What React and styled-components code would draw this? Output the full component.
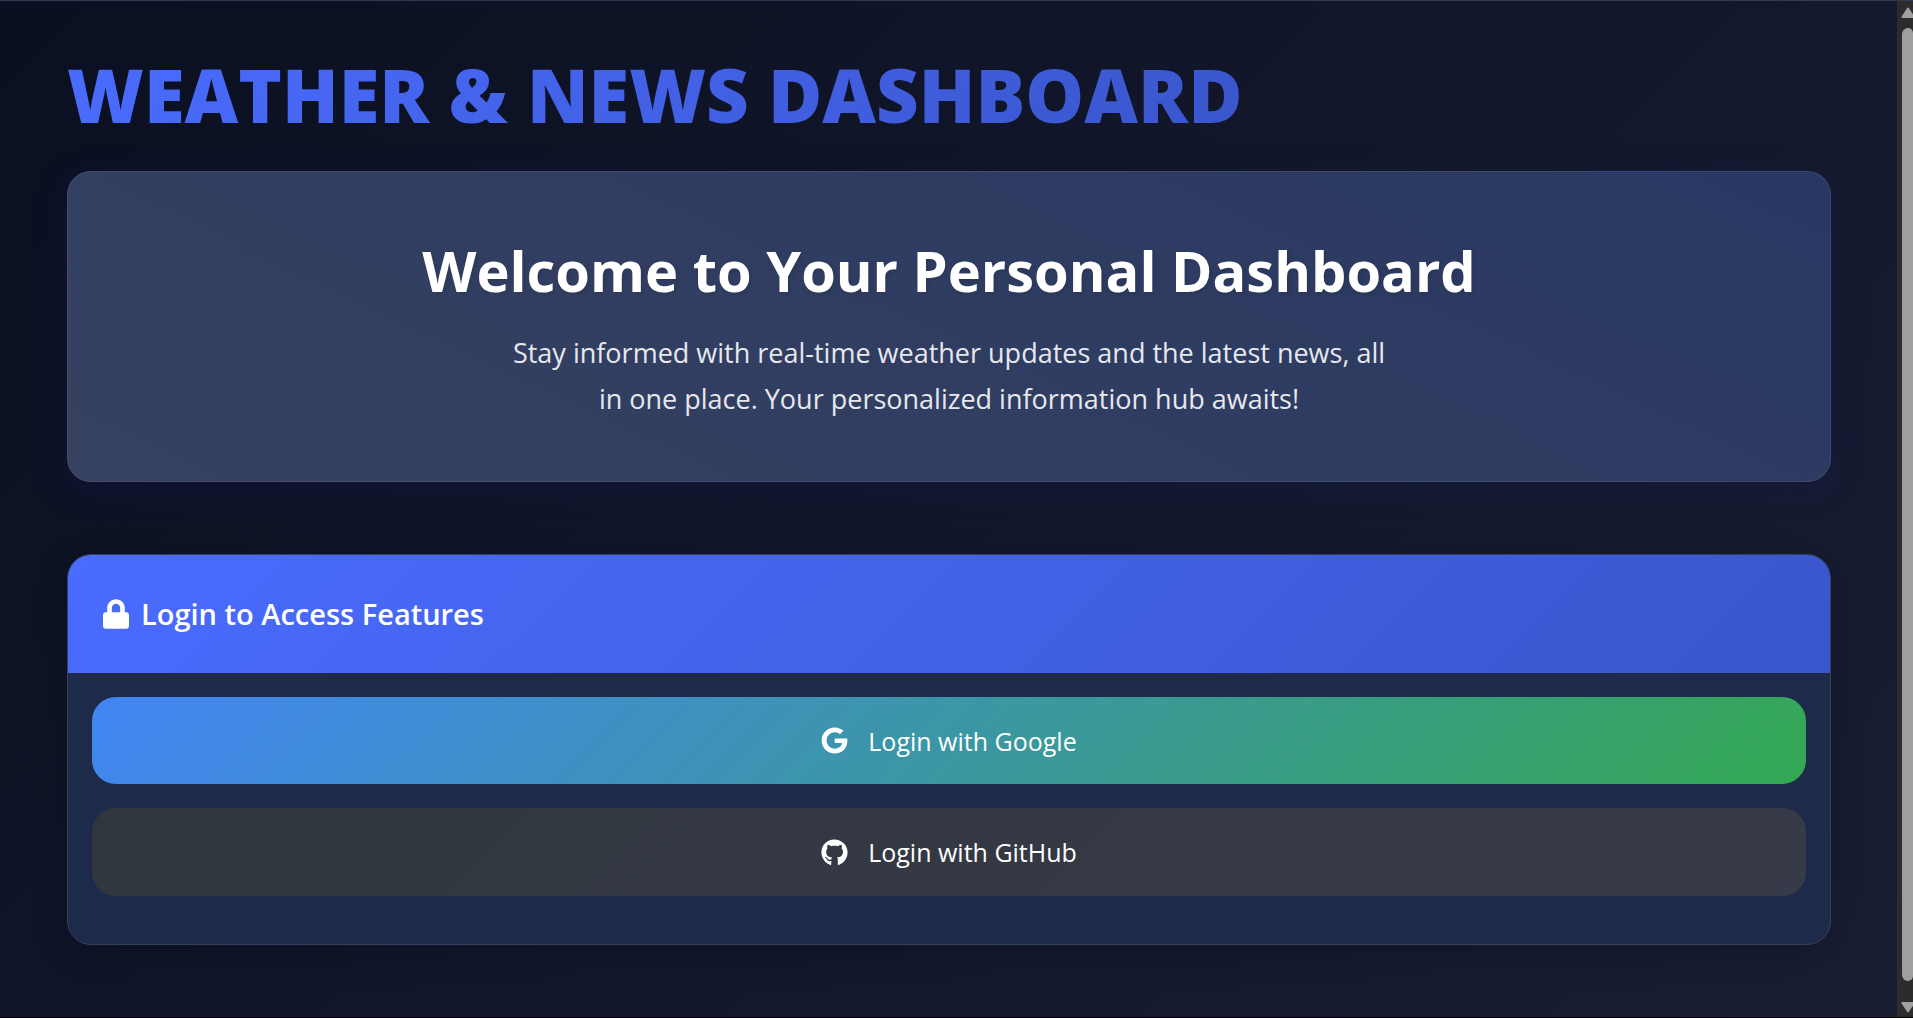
import React from "react";
import styled, { createGlobalStyle } from "styled-components";
import { FaLock, FaGoogle, FaGithub } from "react-icons/fa";

const GlobalStyle = createGlobalStyle`
  *, *::before, *::after { box-sizing: border-box; }
  body {
    margin: 0;
    background: #0a0e1f;
    color: #fff;
    font-family: "Open Sans", "Noto Sans", sans-serif;
  }
  h1, h2, h3, p { margin: 0; }
`;

const Shell = styled.div`
  display: flex;
  height: 100vh;
  overflow: hidden;
  border-top: 1px solid #2f3a4f;
  border-bottom: 1px solid #000;
`;

const Page = styled.main`
  flex: 1;
  min-width: 0;
  padding: 46px 66px 72px 67px;
  background: linear-gradient(135deg, #0a0f21 0%, #1a1e34 100%);
`;

const Title = styled.h1`
  width: fit-content;
  margin-bottom: 28px;
  font-size: 74px;
  line-height: 96px;
  font-weight: 800;
  text-transform: uppercase;
  white-space: nowrap;
  color: transparent;
  background: linear-gradient(135deg, #4a6cff, #3a56cc);
  background-clip: text;
`;

const Hero = styled.section`
  display: flex;
  flex-direction: column;
  align-items: center;
  gap: 22px;
  padding: 60px 60px 59px;
  margin-bottom: 72px;
  text-align: center;
  border: 1px solid rgba(255, 255, 255, 0.08);
  border-radius: 24px;
  background: linear-gradient(25deg, #374260, #293863) border-box;
  box-shadow: 0 8px 32px rgba(20, 24, 80, 0.35);
`;

const Heading = styled.h2`
  font-size: 56px;
  line-height: 76px;
  font-weight: 700;
  text-shadow: 2px 2px 4px rgba(0, 0, 0, 0.1);
`;

const Lead = styled.p`
  max-width: 900px;
  font-size: 27px;
  line-height: 46px;
  color: #e6e8ee;
`;

const Card = styled.section`
  overflow: hidden;
  border: 1px solid #34415f;
  border-radius: 24px;
  background: #1e2a4a;
  box-shadow: 0 8px 32px rgba(8, 10, 24, 0.3);
`;

const CardHeader = styled.header`
  display: flex;
  align-items: center;
  gap: 12px;
  height: 118px;
  padding: 0 35px;
  background: linear-gradient(135deg, #4a6cff, #3a56cc);

  svg { width: 26px; height: 30px; }
`;

const CardTitle = styled.h3`
  font-size: 29px;
  line-height: 40px;
  font-weight: 600;
`;

const Actions = styled.div`
  display: flex;
  flex-direction: column;
  gap: 24px;
  padding: 24px 24px 48px;
`;

const LoginButton = styled.button`
  display: flex;
  align-items: center;
  justify-content: center;
  gap: 20px;
  height: ${(p) => p.$height};
  border: 0;
  border-radius: 24px;
  background: linear-gradient(135deg, ${(p) => p.$from}, ${(p) => p.$to});
  color: #fff;
  font: 400 25px/36px "Open Sans", "Noto Sans", sans-serif;
  cursor: pointer;

  svg { width: 27px; height: 27px; }
`;

const Rail = styled.div`
  display: flex;
  flex-direction: column;
  align-items: flex-end;
  gap: 10px;
  width: 16px;
  padding: 6px 0 4px;
  background: #2c2c2c;
`;

const Thumb = styled.div`
  flex: 1;
  width: 11px;
  margin-bottom: 11px;
  border-radius: 6px 5px 5px 6px;
  background: #9f9f9f;
`;

const Arrow = styled.svg`
  display: block;
  width: 12px;
  height: 11px;
  fill: #9f9f9f;
`;

export default function App() {
  return (
    <>
      <GlobalStyle />
      <Shell>
        <Page>
          <Title>Weather &amp; News Dashboard</Title>
          <Hero>
            <Heading>Welcome to Your Personal Dashboard</Heading>
            <Lead>
              Stay informed with real-time weather updates and the latest news, all in one
              place. Your personalized information hub awaits!
            </Lead>
          </Hero>
          <Card>
            <CardHeader>
              <FaLock aria-hidden="true" />
              <CardTitle>Login to Access Features</CardTitle>
            </CardHeader>
            <Actions>
              <LoginButton type="button" $height="87px" $from="#4285f4" $to="#34a853">
                <FaGoogle aria-hidden="true" />
                Login with Google
              </LoginButton>
              <LoginButton type="button" $height="88px" $from="#30363d" $to="#373b49">
                <FaGithub aria-hidden="true" />
                Login with GitHub
              </LoginButton>
            </Actions>
          </Card>
        </Page>
        <Rail aria-hidden="true">
          <Arrow viewBox="0 0 12 11">
            <path d="M6.2 0.9Q7 0 7.8 0.9L13.6 9.6Q14 11 12.6 11H1.4Q0 11 .6 9.6Z" />
          </Arrow>
          <Thumb />
          <Arrow viewBox="0 0 12 11">
            <path d="M6.2 10.1Q7 11 7.8 10.1L13.6 1.4Q14 0 12.6 0H1.4Q0 0 .6 1.4Z" />
          </Arrow>
        </Rail>
      </Shell>
    </>
  );
}
